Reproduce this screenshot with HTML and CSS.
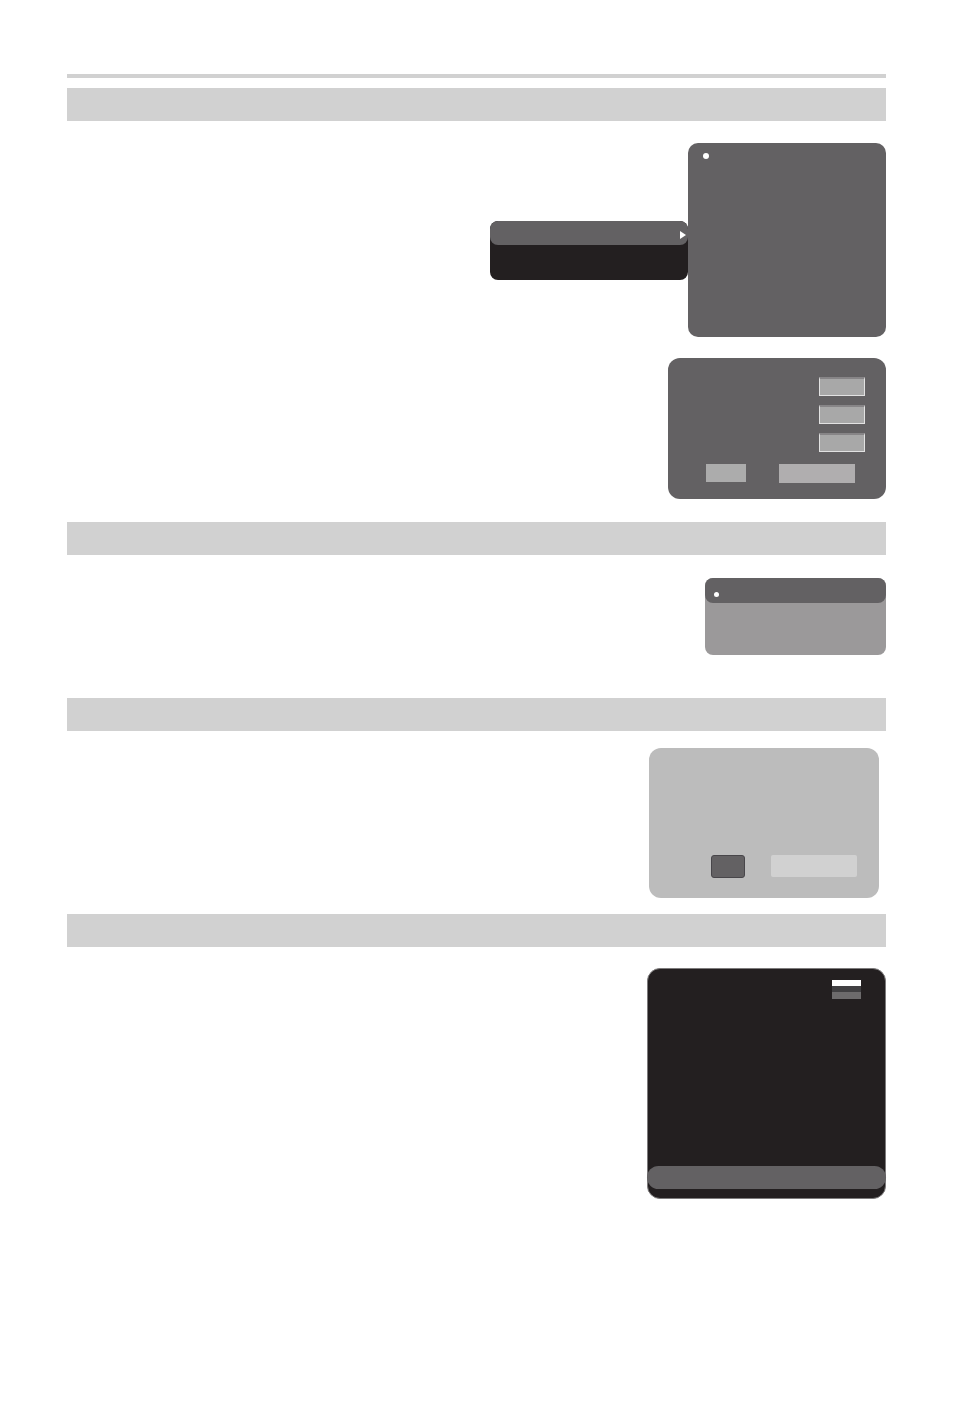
FILE: index.html
```html
<!DOCTYPE html>
<html lang="en">
<head>
    <meta charset="UTF-8">
    <meta name="viewport" content="width=device-width, initial-scale=1.0">
    <title>Menu screens</title>
    <link rel="stylesheet" href="styles.css">
</head>
<body>
    <div class="page">
        <div class="rule"></div>

        <!-- Section 1 : menu + sous-menu, puis boite de reglage -->
        <div class="section-bar"></div>
        <div class="figure figure-menus">
            <div class="submenu">
                <div class="submenu-head">
                    <span class="arrow"></span>
                </div>
            </div>
            <div class="menu-panel">
                <span class="dot"></span>
            </div>
        </div>

        <div class="figure figure-dialog">
            <div class="dialog">
                <div class="field"></div>
                <div class="field"></div>
                <div class="field"></div>
                <div class="dialog-buttons">
                    <div class="btn-small"></div>
                    <div class="btn-wide"></div>
                </div>
            </div>
        </div>

        <!-- Section 2 -->
        <div class="section-bar bar-2"></div>
        <div class="figure figure-list">
            <div class="list-box">
                <div class="list-head">
                    <span class="dot dot-small"></span>
                </div>
            </div>
        </div>

        <!-- Section 3 -->
        <div class="section-bar bar-3"></div>
        <div class="figure figure-confirm">
            <div class="confirm-box">
                <div class="confirm-buttons">
                    <div class="btn-dark"></div>
                    <div class="btn-light"></div>
                </div>
            </div>
        </div>

        <!-- Section 4 -->
        <div class="section-bar bar-4"></div>
        <div class="figure figure-screen">
            <div class="screen">
                <div class="flag">
                    <span class="flag-white"></span>
                    <span class="flag-dark"></span>
                    <span class="flag-grey"></span>
                </div>
                <div class="screen-bar"></div>
            </div>
        </div>
    </div>
</body>
</html>
```

FILE: styles.css
```css
* {
    box-sizing: border-box;
}

body {
    margin: 0;
    background: #ffffff;
    font-family: "Liberation Sans", Arial, sans-serif;
}

.page {
    width: 819px;
    margin-left: 67px;
    padding-top: 74px;
    padding-bottom: 210px;
}

.rule {
    height: 4px;
    background: #d1d1d1;
    margin-bottom: 10px;
}

.section-bar {
    height: 33px;
    background: #d1d1d1;
}

.bar-2 {
    margin-top: 23px;
}

.bar-3 {
    margin-top: 43px;
}

.bar-4 {
    margin-top: 16px;
}

.figure {
    display: flex;
    justify-content: flex-end;
    align-items: flex-start;
}

/* Menus */
.figure-menus {
    margin-top: 22px;
}

.submenu {
    width: 198px;
    height: 59px;
    margin-top: 78px;
    background: #231f20;
    border-radius: 8px;
    overflow: hidden;
}

.submenu-head {
    height: 24px;
    background: #636163;
    border-radius: 8px;
    display: flex;
    justify-content: flex-end;
    align-items: center;
    padding-top: 4px;
    padding-right: 2px;
}

.arrow {
    width: 0;
    height: 0;
    border-top: 4px solid transparent;
    border-bottom: 4px solid transparent;
    border-left: 6px solid #ffffff;
}

.menu-panel {
    width: 198px;
    height: 194px;
    background: #636163;
    border-radius: 10px;
    padding: 10px 0 0 15px;
}

.dot {
    display: block;
    width: 6px;
    height: 6px;
    border-radius: 50%;
    background: #ffffff;
}

/* Boite de reglage */
.figure-dialog {
    margin-top: 21px;
}

.dialog {
    width: 218px;
    height: 141px;
    background: #636163;
    border-radius: 12px;
    padding: 19px 21px 0 0;
    display: flex;
    flex-direction: column;
    align-items: flex-end;
    gap: 9px;
}

.field {
    width: 46px;
    height: 19px;
    background: #a8a8a8;
    border: 1px solid #e2e2e2;
    border-top: 2px solid #878587;
}

.dialog-buttons {
    align-self: stretch;
    display: flex;
    gap: 33px;
    padding-left: 38px;
    margin-top: 3px;
}

.btn-small {
    width: 40px;
    height: 18px;
    background: #acacac;
}

.btn-wide {
    width: 76px;
    height: 19px;
    background: #b0aeaf;
}

/* Liste */
.figure-list {
    margin-top: 23px;
}

.list-box {
    width: 181px;
    height: 77px;
    background: #9b999a;
    border-radius: 8px;
}

.list-head {
    height: 25px;
    background: #636163;
    border-radius: 8px;
    padding: 14px 0 0 9px;
}

.dot-small {
    width: 5px;
    height: 5px;
}

/* Confirmation */
.figure-confirm {
    margin-top: 17px;
    padding-right: 7px;
}

.confirm-box {
    width: 230px;
    height: 150px;
    background: #bcbcbc;
    border-radius: 12px;
    display: flex;
    flex-direction: column;
    justify-content: flex-end;
    padding: 0 0 20px 62px;
}

.confirm-buttons {
    display: flex;
    align-items: flex-start;
    gap: 26px;
}

.btn-dark {
    width: 34px;
    height: 23px;
    background: #636163;
    border: 1px solid #48464a;
    border-radius: 3px;
}

.btn-light {
    width: 86px;
    height: 22px;
    background: #d1d1d1;
    border-radius: 2px;
}

/* Ecran */
.figure-screen {
    margin-top: 21px;
}

.screen {
    width: 239px;
    height: 231px;
    background: #231f20;
    border: 1px solid #7d7b7c;
    border-radius: 13px;
    display: flex;
    flex-direction: column;
    justify-content: space-between;
    padding: 11px 0 9px 0;
}

.flag {
    align-self: flex-end;
    width: 29px;
    margin-right: 24px;
    display: flex;
    flex-direction: column;
}

.flag-white {
    height: 6px;
    background: #ffffff;
}

.flag-dark {
    height: 6px;
    background: #414042;
}

.flag-grey {
    height: 7px;
    background: #6d6b6c;
}

.screen-bar {
    height: 23px;
    margin: 0 -1px;
    background: #636163;
    border-radius: 12px;
}
```
